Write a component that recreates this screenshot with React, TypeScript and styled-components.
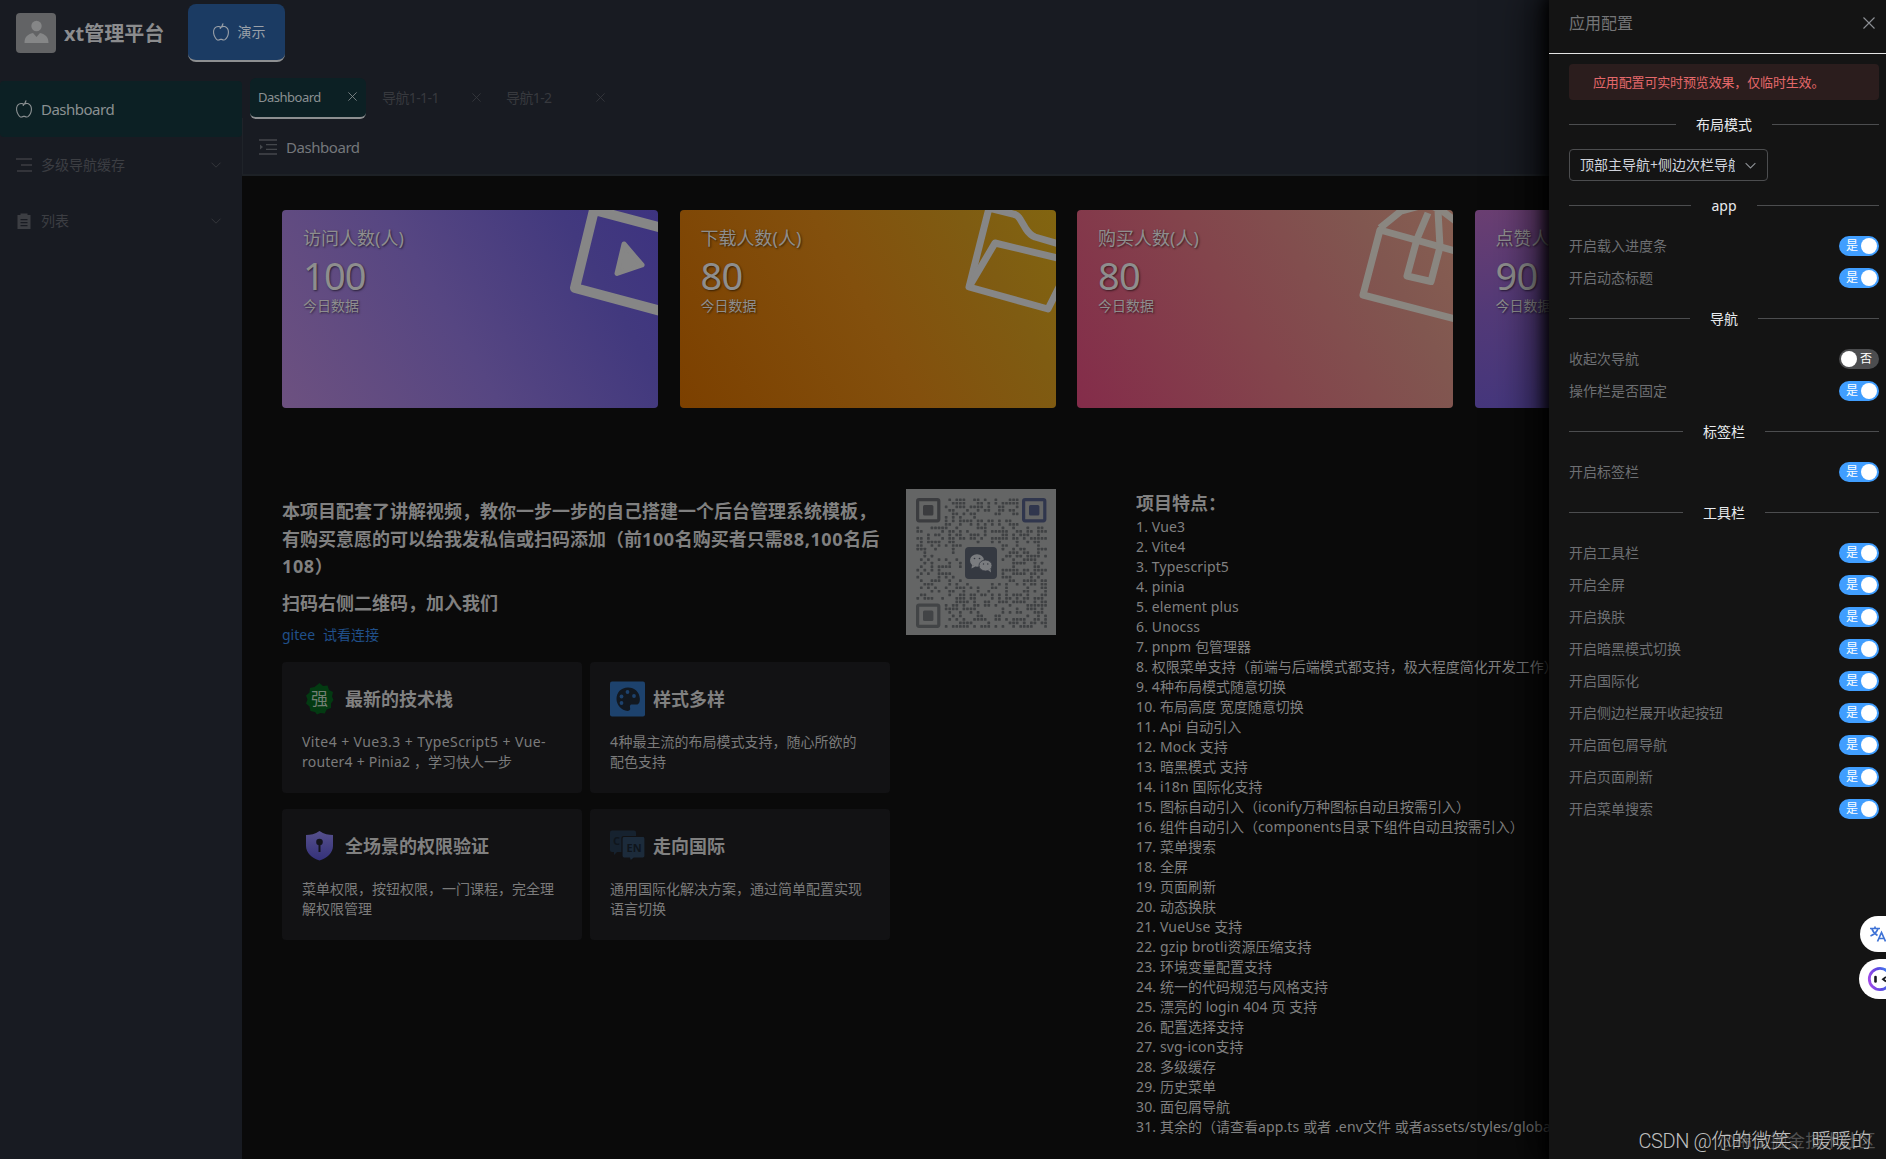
import React from "react";
import styled, { createGlobalStyle, css } from "styled-components";

const GlobalStyle = createGlobalStyle`
  *, *::before, *::after { box-sizing: border-box; }
  html, body { margin: 0; padding: 0; background: #0a0a0a; overflow: hidden; }
  body { font-family: "Noto Sans", "Noto Sans CJK SC", sans-serif; font-size: 14px; line-height: 20px; color: #808080; }
  h1, h2, h3, p, ol { margin: 0; padding: 0; }
`;

/* ---------- frame ---------- */
const Page = styled.div`
  position: relative;
  width: 1886px;
  height: 1159px;
  display: flex;
  flex-direction: column;
  overflow: hidden;
  background: #181b22;
`;
const Header = styled.header`
  flex: none;
  height: 66px;
  display: flex;
  align-items: flex-start;
  padding: 4px 16px 0;
`;
const Brand = styled.div`
  display: flex;
  align-items: center;
  gap: 8px;
  width: 172px;
  height: 58px;
`;
const Avatar = styled.div`
  width: 40px;
  height: 40px;
  border-radius: 4px;
  background: #626365;
  flex: none;
`;
const BrandName = styled.h1`
  font-size: 20px;
  line-height: 28px;
  padding-top: 1px;
  font-weight: 700;
  color: #8b8c8e;
  white-space: nowrap;
`;
const TopTab = styled.div`
  width: 97px;
  height: 58px;
  border-radius: 8px;
  background: #1b3b63;
  border-bottom: 2px solid #8d8f91;
  display: flex;
  align-items: center;
  justify-content: center;
  gap: 7px;
  padding-left: 3px;
  color: #9aa0a8;
`;
const Body = styled.div`
  flex: 1;
  display: flex;
  min-height: 0;
`;
const Sidebar = styled.nav`
  flex: none;
  width: 242px;
  padding-top: 15px;
`;
const MenuItem = styled.div<{ $active?: boolean }>`
  height: 56px;
  display: flex;
  align-items: center;
  gap: 9px;
  padding: 0 20px 0 16px;
  border-radius: 4px;
  color: #3c3e43;
  font-size: 14px;
  ${(p) =>
    p.$active &&
    css`
      gap: 7px;
      padding-left: 14px;
      padding-bottom: 1px;
      background: #0c2024;
      color: #8b9092;
      font-size: 15px;
    `}
`;
const MenuLabel = styled.span<{ $tight?: boolean }>`
  flex: 1;
  white-space: nowrap;
  letter-spacing: ${(p) => (p.$tight ? "-0.5px" : "0")};
`;
const Main = styled.main`
  flex: 1;
  min-width: 0;
  display: flex;
  flex-direction: column;
`;
const Tabs = styled.div`
  display: flex;
  gap: 8px;
  height: 52px;
  padding: 12px 0 0 8px;
`;
const Tab = styled.div<{ $active?: boolean; $width: number }>`
  width: ${(p) => p.$width}px;
  height: 41px;
  display: flex;
  align-items: center;
  justify-content: space-between;
  padding: 0 9px 0 8px;
  border-bottom: 2px solid transparent;
  color: #37393e;
  white-space: nowrap;
  letter-spacing: -0.6px;
  ${(p) =>
    p.$active &&
    css`
      padding-bottom: 2px;
      background: #0c2024;
      border-color: #8d8f91;
      border-radius: 6px;
      color: #8b9092;
      font-size: 13px;
      letter-spacing: -0.5px;
    `}
`;
const Crumbs = styled.div`
  height: 58px;
  display: flex;
  align-items: center;
  gap: 9px;
  padding: 1px 0 0 16px;
  border-bottom: 2px solid #1d2126;
  border-left: 1px solid #1f2329;
  font-size: 15px;
  letter-spacing: -0.45px;
  color: #74777b;
`;
const Content = styled.section`
  flex: 1;
  background: #0a0a0a;
  padding: 34px 0 0 40px;
  overflow: hidden;
`;

/* ---------- statistic cards ---------- */
const Stats = styled.div`
  display: grid;
  grid-template-columns: repeat(4, 376px);
  column-gap: 21.5px;
`;
const StatCard = styled.article<{ $bg: string }>`
  position: relative;
  height: 198px;
  border-radius: 4px;
  overflow: hidden;
  padding: 15px 21px;
  background: ${(p) => p.$bg};
  color: #8e8e8e;
  text-shadow: 1px 1px 2px rgba(0, 0, 0, 0.55);
`;
const StatTitle = styled.div`
  font-size: 18px;
  line-height: 26px;
`;
const StatValue = styled.div`
  font-size: 38px;
  line-height: 46px;
  margin-top: 1px;
  letter-spacing: -0.8px;
`;
const StatNote = styled.div`
  font-size: 14px;
  line-height: 16px;
`;
const StatArt = styled.svg`
  position: absolute;
  inset: 0;
  width: 376px;
  height: 199px;
  fill: none;
  stroke: #868686;
  stroke-width: 7;
  stroke-linejoin: round;
`;

/* ---------- introduction ---------- */
const Intro = styled.div`
  display: flex;
  padding-top: 81px;
`;
const Pitch = styled.div`
  width: 607px;
  padding-top: 9px;
  margin-right: 17px;
`;
const PitchText = styled.h2<{ $top?: number }>`
  font-size: 18px;
  line-height: 27.6px;
  font-weight: 700;
  color: #808080;
  margin-top: ${(p) => p.$top ?? 0}px;
  white-space: nowrap;
`;
const Links = styled.div`
  display: flex;
  gap: 8px;
  margin-top: 8px;
  height: 20px;
  color: #20508a;
`;
const Features = styled.div`
  display: grid;
  grid-template-columns: 300px 300px;
  grid-auto-rows: 131px;
  gap: 16px 8px;
  margin: 17px 0 0;
`;
const Feature = styled.article`
  background: #121214;
  border-radius: 4px;
  padding: 19px 20px;
`;
const FeatureHead = styled.div`
  display: flex;
  align-items: center;
  gap: 8px;
  height: 36px;
  margin-bottom: 15px;
`;
const FeatureTitle = styled.h3`
  font-size: 18px;
  line-height: 26px;
  color: #808080;
`;
const FeatureText = styled.p`
  color: #7b7b7b;
  white-space: nowrap;
`;
const QrBox = styled.svg`
  flex: none;
  width: 150px;
  height: 146px;
  margin-right: 80px;
  background: #646565;
`;
const Points = styled.div`
  white-space: nowrap;
`;
const PointsTitle = styled.h2`
  font-size: 18px;
  line-height: 28px;
  color: #808080;
`;
const Point = styled.p`
  height: 20px;
`;
const Latin = styled.span<{ $track: number }>`
  letter-spacing: ${(p) => p.$track}em;
`;

/* ---------- drawer ---------- */
const Drawer = styled.aside`
  position: absolute;
  top: 0;
  right: 0;
  width: 337px;
  height: 100%;
  background: #141414;
  box-shadow: 0 0 14px 4px #000, -12px 0 36px 6px rgba(0, 0, 0, 0.55);
`;
const DrawerHead = styled.div`
  height: 54px;
  display: flex;
  align-items: center;
  justify-content: space-between;
  padding: 0 11px 7px 20px;
  border-bottom: 1px solid #e4e4e4;
  font-size: 16px;
  color: #747577;
`;
const DrawerBody = styled.div`
  padding: 10px 7px 0 20px;
`;
const Alert = styled.div`
  height: 36px;
  border-radius: 4px;
  background: #2b1d1d;
  color: #e4686a;
  font-size: 13px;
  letter-spacing: -0.15px;
  line-height: 36px;
  padding-left: 24px;
`;
const Divider = styled.div`
  display: flex;
  align-items: center;
  gap: 20px;
  height: 1px;
  margin: 24px 0;
  color: #e8eaed;
  font-size: 14px;
  white-space: nowrap;
  &::before,
  &::after {
    content: "";
    flex: 1;
    height: 1px;
    background: #4c4d4f;
  }
`;
const Select = styled.div`
  width: 199px;
  height: 32px;
  border: 1px solid #4c4d4f;
  border-radius: 4px;
  display: flex;
  align-items: center;
  gap: 9px;
  padding: 0 10px;
  color: #cfd3dc;
`;
const SelectText = styled.span`
  flex: 1;
  overflow: hidden;
  white-space: nowrap;
`;
const Setting = styled.div`
  height: 32px;
  display: flex;
  align-items: center;
  justify-content: space-between;
  color: #6d6f72;
`;
const Switch = styled.div<{ $on: boolean }>`
  width: 40px;
  height: 20px;
  border-radius: 10px;
  display: flex;
  align-items: center;
  justify-content: space-between;
  flex-direction: ${(p) => (p.$on ? "row" : "row-reverse")};
  padding: ${(p) => (p.$on ? "0 2px 0 7px" : "0 7px 0 2px")};
  background: ${(p) => (p.$on ? "#409eff" : "#4c4d4f")};
  color: #fff;
  font-size: 12px;
  &::after {
    content: "";
    width: 16px;
    height: 16px;
    border-radius: 50%;
    background: #fff;
  }
`;

/* ---------- overlays ---------- */
const FloatButton = styled.div<{ $top: number; $left: number; $size: number }>`
  position: absolute;
  top: ${(p) => p.$top}px;
  left: ${(p) => p.$left}px;
  width: 60px;
  height: ${(p) => p.$size}px;
  border-radius: ${(p) => p.$size / 2}px;
  background: #fff;
`;
const Watermark = styled.div<{ $back?: boolean }>`
  position: absolute;
  left: ${(p) => (p.$back ? 1719 : 1638.5)}px;
  top: 1126px;
  line-height: 30px;
  white-space: nowrap;
  font-family: Roboto, "Noto Sans CJK SC", sans-serif;
  font-size: ${(p) => (p.$back ? 17.6 : 20)}px;
  font-weight: ${(p) => (p.$back ? 400 : 300)};
  color: ${(p) => (p.$back ? "#505050" : "#c0c0c0")};
`;

/* ---------- icons ---------- */
const AppleIcon = ({ size }: { size: number }) => (
  <svg width={size} height={size} viewBox="0 0 1024 1024" fill="currentColor">
    <path d="M599.872 203.776a189.44 189.44 0 0 1 64.384-4.672l2.624.128c31.168 1.024 51.2 4.096 79.488 16.32 37.632 16.128 74.496 45.056 111.488 89.344 96.384 115.264 82.752 372.8-34.752 521.728-7.68 9.728-32 41.6-30.72 39.936a426.624 426.624 0 0 1-30.08 35.776c-31.232 32.576-65.28 49.216-110.08 50.048-31.36.64-53.568-5.312-84.288-18.752l-6.528-2.88c-20.992-9.216-30.592-11.904-47.296-11.904-18.112 0-28.608 2.88-51.136 12.672l-6.464 2.816c-28.416 12.224-48.32 18.048-76.16 19.2-74.112 2.752-116.928-38.08-180.672-132.16-96.64-142.08-132.608-349.312-55.04-486.4 46.272-81.92 129.92-133.632 220.672-135.04 32.832-.576 60.288 6.848 99.648 22.72 27.136 10.88 34.752 13.76 37.376 14.272 16.256-20.16 27.776-36.992 34.56-50.24 13.568-26.304 27.2-59.968 40.704-100.8a32 32 0 1 1 60.8 20.224c-12.608 37.888-25.408 70.4-38.528 97.664zm-51.52 78.08c-14.528 17.792-31.808 37.376-51.904 58.816a32 32 0 1 1-46.72-43.776l12.288-13.248c-28.032-11.2-61.248-26.688-95.68-26.112-70.4 1.088-135.296 41.6-171.648 105.792C121.6 492.608 176 684.16 247.296 788.992c34.816 51.328 76.352 108.992 130.944 106.944 52.48-2.112 72.32-34.688 135.872-34.688 63.552 0 81.28 34.688 136.96 33.536 56.448-1.088 75.776-39.04 126.848-103.872 107.904-136.768 107.904-362.752 35.776-449.088-72.192-86.272-124.672-84.096-151.68-85.12-41.472-4.288-81.6 12.544-113.664 25.152z" />
  </svg>
);
const PersonIcon = () => (
  <svg width="40" height="40" viewBox="0 0 40 40" fill="#858687">
    <circle cx="20.5" cy="13" r="5.2" />
    <path d="M8.5 30c0-6 3-8.5 8.5-10l3.5 4 3.5-4c5.500 1.500 8.500 4 8.500 10z" />
  </svg>
);
const LinesIcon = () => (
  <svg width="16" height="16" viewBox="0 0 16 16" stroke="currentColor" strokeWidth="1.6">
    <path d="M0 2h16M5 8h11M1 14h15" />
  </svg>
);
const ClipboardIcon = () => (
  <svg width="16" height="18" viewBox="0 0 16 18" fill="currentColor">
    <path
      fillRule="evenodd"
      d="M1.500 3h3V1.500h7V3h3v14h-13zM4.500 7h7V8.300h-7zM4.500 10h7v1.300h-7zM4.500 13h7v1.300h-7z"
    />
  </svg>
);
const IndentIcon = () => (
  <svg width="18" height="16" viewBox="0 0 18 16" stroke="#44474c" strokeWidth="1.3">
    <path d="M0 1h18M7 5.700h11M7 10.300h11M0 15h18" />
    <path d="M1 5.500 4 8l-3 2.500z" fill="#44474c" stroke="none" />
  </svg>
);
const Chevron = ({ size, color }: { size: number; color: string }) => (
  <svg width={size} height={size} viewBox="0 0 12 12" fill="none" stroke={color} strokeWidth="1">
    <path d="M1.500 3.700 6 8.200l4.500-4.500" />
  </svg>
);
const Cross = ({ size, color = "currentColor" }: { size: number; color?: string }) => (
  <svg width={size} height={size} viewBox="0 0 12 12" stroke={color} strokeWidth="1.1">
    <path d="M.5.5l11 11M11.500.5l-11 11" />
  </svg>
);
const StrongIcon = () => (
  <svg width="35" height="36" viewBox="0 0 35 36">
    <path
      d="M17.500 2l3.500 3 4.500-.5 1.500 4.500 4 2-1 4.500 1.500 3.500-2.500 3.500v4.500l-4.300 1.500-2 4-4.200-.5-3.500 1.500-2-2.500-4.500-1-1-4.500-3.500-3 1.500-4-1.500-4 3.500-3 .5-4.500 4.500-1z"
      fill="#033a12"
    />
    <text x="17.500" y="24" textAnchor="middle" fontSize="17" fill="#748076" fontFamily="'Noto Sans CJK SC', sans-serif">
      强
    </text>
  </svg>
);
const PaletteIcon = () => (
  <svg width="35" height="36" viewBox="0 0 35 36">
    <rect y=".5" width="35" height="35" rx="2" fill="#1d426d" />
    <path
      d="M18 6.500C11 6.500 6.500 11.500 6.500 18c0 6 5 11.500 11 12 1.500 0 3-1 2.700-2.700-.5-2-.5-3.800 1.800-3.800h4.500c2.500 0 3.500-2.500 3.300-6C29.500 11 24.500 6.500 18 6.500z"
      fill="#121820"
    />
    <g fill="#1d426d">
      <circle cx="11.500" cy="22" r="1.900" />
      <circle cx="11.500" cy="15.500" r="1.900" />
      <circle cx="17.500" cy="11" r="1.900" />
      <circle cx="24" cy="15" r="1.900" />
    </g>
  </svg>
);
const ShieldIcon = () => (
  <svg width="35" height="36" viewBox="0 0 35 36">
    <defs>
      <linearGradient id="shield" x1="0" y1="0" x2="0" y2="1">
        <stop offset="0" stopColor="#56508c" />
        <stop offset="1" stopColor="#34317a" />
      </linearGradient>
    </defs>
    <path d="M17.500 3C22 6 26.500 7 31 7v11c0 7-6 12-13.500 14.500C10 30 4 25 4 18V7c4.500 0 9-1 13.500-4z" fill="url(#shield)" />
    <circle cx="17.500" cy="14" r="3.300" fill="#14141c" />
    <path d="M16.500 15h2v9h-2z" fill="#14141c" />
  </svg>
);
const LanguageIcon = () => (
  <svg width="35" height="36" viewBox="0 0 35 36">
    <path d="M2 2.500h22q2 0 2 2V24H7l-3 3v-3H2q-2 0-2-2V4.500q0-2 2-2z" fill="#16222f" />
    <text x="3" y="17" fontSize="11" fontFamily="'Noto Sans', sans-serif" fontWeight="700" fill="#0f151c">
      C
    </text>
    <path
      d="M14 8.500h19q2 0 2 2V28q0 2-2 2h-9l-3.500 3-1-3H14q-2 0-2-2V10.500q0-2 2-2z"
      fill="#1c2b3b"
      stroke="#121214"
      strokeWidth="1.200"
    />
    <text x="16.500" y="24" fontSize="11" fontFamily="'Noto Sans', sans-serif" fontWeight="700" fill="#0f151c">
      EN
    </text>
  </svg>
);

/* ---------- QR code ---------- */
const N = 37;
const isReserved = (r: number, c: number) =>
  (r < 8 && c < 8) || (r < 8 && c > N - 9) || (r > N - 9 && c < 8) || (r > 12 && r < 24 && c > 12 && c < 24);
const modules: [number, number][] = [];
let seed = 20230;
for (let r = 0; r < N; r++) {
  for (let c = 0; c < N; c++) {
    seed = (seed * 1103515245 + 12345) % 2147483648;
    if (!isReserved(r, c) && seed / 2147483648 < 0.47) modules.push([r, c]);
  }
}
const Finder = ({ x, y, color }: { x: number; y: number; color: string }) => (
  <g>
    <rect x={x + 1.6} y={y + 1.6} width="21.2" height="21.2" rx="1.5" fill="none" stroke={color} strokeWidth="3.2" />
    <rect x={x + 7} y={y + 7} width="10.4" height="10.4" rx="1.5" fill={color} />
  </g>
);
const QrCode = () => (
  <QrBox viewBox="0 0 150 146">
    {modules.map(([r, c]) => (
      <rect key={`${r}-${c}`} x={10 + c * 3.55 + 0.4} y={9 + r * 3.52 + 0.4} width="2.7" height="2.7" rx=".6" fill="#3f4143" />
    ))}
    <Finder x={10} y={9} color="#3b3c3f" />
    <Finder x={116} y={9} color="#30364d" />
    <Finder x={10} y={114.5} color="#424446" />
    <rect x="59" y="58" width="32" height="32" rx="4" fill="#353941" />
    <g fill="#7a7c7f">
      <ellipse cx="71" cy="71.5" rx="7" ry="6.2" />
      <path d="M66 76l-.5 3.500 4-2z" />
      <ellipse cx="79.5" cy="76.5" rx="6.5" ry="5.5" stroke="#353941" strokeWidth=".8" />
      <path d="M82 81l3 2.500-.5-4z" />
    </g>
    <g fill="#353941">
      <circle cx="68.5" cy="69.5" r=".8" />
      <circle cx="73.5" cy="69.5" r=".8" />
      <circle cx="77.5" cy="75" r=".7" />
      <circle cx="81.8" cy="75" r=".7" />
    </g>
  </QrBox>
);

/* Tracks the Latin runs of a mixed-script line, leaving Chinese glyphs on their grid. */
const Mixed = ({ text, track = 0.01 }: { text: string; track?: number }) => (
  <>
    {text.split(/([\x20-\x7e]+)/).map((run, i) =>
      i % 2 ? (
        <Latin key={i} $track={track}>
          {run}
        </Latin>
      ) : (
        run
      ),
    )}
  </>
);

const stats = [
  {
    title: "访问人数(人)",
    value: 100,
    bg: "linear-gradient(60deg, #6d5180 0%, #564682 45%, #42397e 80%, #3d3380 100%)",
    art: (
      <>
        <path d="M392 21 312 0 293 78 392 104.500" strokeWidth="10" />
        <path d="M342 34 360 55 335 63.500z" fill="#868686" strokeWidth="5" />
      </>
    ),
  },
  {
    title: "下载人数(人)",
    value: 80,
    bg: "linear-gradient(60deg, #7c4000 0%, #83500d 50%, #7f5c12 80%, #826510 100%)",
    art: (
      <>
        <path d="M382 35 355 27Q350 25 346 19L340 9Q338 5 333 4L309 -2 289 77 368 99 384 67" />
        <path d="M289 77 315 33 382 49" />
      </>
    ),
  },
  {
    title: "购买人数(人)",
    value: 80,
    bg: "linear-gradient(60deg, #842c4a 0%, #83454c 45%, #815750 80%, #875f52 100%)",
    art: (
      <g stroke="#8a8680">
        <path d="M382 42 303 20 286 85 382 110" />
        <path d="M303 18 324 1 350 -6 364 0 380 12" />
        <path d="M340 29 330 66 354 71.500 363 37M340 29 351 3M363 37 361 1" />
      </g>
    ),
  },
  {
    title: "点赞人数(人)",
    value: 90,
    bg: "linear-gradient(170deg, #6b3f72 0%, #533a78 40%, #3d3580 100%)",
    art: null,
  },
];

const features = [
  { icon: <StrongIcon />, title: "最新的技术栈", lines: ["Vite4 + Vue3.3 + TypeScript5 + Vue-", "router4 + Pinia2 ，学习快人一步"] },
  { icon: <PaletteIcon />, title: "样式多样", lines: ["4种最主流的布局模式支持，随心所欲的", "配色支持"] },
  { icon: <ShieldIcon />, title: "全场景的权限验证", lines: ["菜单权限，按钮权限，一门课程，完全理", "解权限管理"] },
  { icon: <LanguageIcon />, title: "走向国际", lines: ["通用国际化解决方案，通过简单配置实现", "语言切换"] },
];

const points = [
  "Vue3",
  "Vite4",
  "Typescript5",
  "pinia",
  "element plus",
  "Unocss",
  "pnpm 包管理器",
  "权限菜单支持（前端与后端模式都支持，极大程度简化开发工作）",
  "4种布局模式随意切换",
  "布局高度 宽度随意切换",
  "Api 自动引入",
  "Mock 支持",
  "暗黑模式 支持",
  "i18n 国际化支持",
  "图标自动引入（iconify万种图标自动且按需引入）",
  "组件自动引入（components目录下组件自动且按需引入）",
  "菜单搜索",
  "全屏",
  "页面刷新",
  "动态换肤",
  "VueUse 支持",
  "gzip brotli资源压缩支持",
  "环境变量配置支持",
  "统一的代码规范与风格支持",
  "漂亮的 login 404 页 支持",
  "配置选择支持",
  "svg-icon支持",
  "多级缓存",
  "历史菜单",
  "面包屑导航",
  "其余的（请查看app.ts 或者 .env文件 或者assets/styles/global",
];

const groups: { title: string; items: [string, boolean][] }[] = [
  { title: "app", items: [["开启载入进度条", true], ["开启动态标题", true]] },
  { title: "导航", items: [["收起次导航", false], ["操作栏是否固定", true]] },
  { title: "标签栏", items: [["开启标签栏", true]] },
  {
    title: "工具栏",
    items: [
      ["开启工具栏", true],
      ["开启全屏", true],
      ["开启换肤", true],
      ["开启暗黑模式切换", true],
      ["开启国际化", true],
      ["开启侧边栏展开收起按钮", true],
      ["开启面包屑导航", true],
      ["开启页面刷新", true],
      ["开启菜单搜索", true],
    ],
  },
];

export default function App() {
  return (
    <>
      <GlobalStyle />
      <Page>
        <Header>
          <Brand>
            <Avatar>
              <PersonIcon />
            </Avatar>
            <BrandName>xt管理平台</BrandName>
          </Brand>
          <TopTab>
            <AppleIcon size={20} />
            演示
          </TopTab>
        </Header>
        <Body>
          <Sidebar>
            <MenuItem $active>
              <AppleIcon size={20} />
              <MenuLabel $tight>Dashboard</MenuLabel>
            </MenuItem>
            <MenuItem>
              <LinesIcon />
              <MenuLabel>多级导航缓存</MenuLabel>
              <Chevron size={12} color="#34363b" />
            </MenuItem>
            <MenuItem>
              <ClipboardIcon />
              <MenuLabel>列表</MenuLabel>
              <Chevron size={12} color="#34363b" />
            </MenuItem>
          </Sidebar>
          <Main>
            <Tabs>
              <Tab $active $width={116}>
                Dashboard <Cross size={9} />
              </Tab>
              <Tab $width={116}>
                导航1-1-1 <Cross size={9} />
              </Tab>
              <Tab $width={116}>
                导航1-2 <Cross size={9} />
              </Tab>
            </Tabs>
            <Crumbs>
              <IndentIcon />
              Dashboard
            </Crumbs>
            <Content>
              <Stats>
                {stats.map((s) => (
                  <StatCard key={s.title} $bg={s.bg}>
                    <StatArt viewBox="0 0 376 199">{s.art}</StatArt>
                    <StatTitle>{s.title}</StatTitle>
                    <StatValue>{s.value}</StatValue>
                    <StatNote>今日数据</StatNote>
                  </StatCard>
                ))}
              </Stats>
              <Intro>
                <Pitch>
                  <PitchText>
                    本项目配套了讲解视频，教你一步一步的自己搭建一个后台管理系统模板，
                    <br />
                    <Mixed track={0.035} text="有购买意愿的可以给我发私信或扫码添加（前100名购买者只需88,100名后" />
                    <br />
                    <Mixed track={0.035} text="108" />）
                  </PitchText>
                  <PitchText $top={9}>扫码右侧二维码，加入我们</PitchText>
                  <Links>
                    <span>gitee</span>
                    <span>试看连接</span>
                  </Links>
                  <Features>
                    {features.map((f) => (
                      <Feature key={f.title}>
                        <FeatureHead>
                          {f.icon}
                          <FeatureTitle>{f.title}</FeatureTitle>
                        </FeatureHead>
                        {f.lines.map((line) => (
                          <FeatureText key={line}>
                            <Mixed track={line.startsWith("router4") ? 0.015 : 0.03} text={line} />
                          </FeatureText>
                        ))}
                      </Feature>
                    ))}
                  </Features>
                </Pitch>
                <QrCode />
                <Points>
                  <PointsTitle>项目特点：</PointsTitle>
                  {points.map((point, i) => (
                    <Point key={point}>
                      <Mixed text={`${i + 1}. ${point}`} />
                    </Point>
                  ))}
                </Points>
              </Intro>
            </Content>
          </Main>
        </Body>

        <Drawer>
          <DrawerHead>
            应用配置
            <Cross size={12} color="#8d9095" />
          </DrawerHead>
          <DrawerBody>
            <Alert>应用配置可实时预览效果，仅临时生效。</Alert>
            <Divider>布局模式</Divider>
            <Select>
              <SelectText>顶部主导航+侧边次栏导航</SelectText>
              <Chevron size={13} color="#8d9095" />
            </Select>
            {groups.map((g) => (
              <React.Fragment key={g.title}>
                <Divider>{g.title}</Divider>
                {g.items.map(([label, on]) => (
                  <Setting key={label}>
                    {label}
                    <Switch $on={on}>{on ? "是" : "否"}</Switch>
                  </Setting>
                ))}
              </React.Fragment>
            ))}
          </DrawerBody>
        </Drawer>

        <FloatButton $top={916} $left={1860} $size={36}>
          <svg width="26" height="36" viewBox="0 0 26 36" fill="none" stroke="#3f73d6" strokeWidth="1.7">
            <path d="M10 12.500h10M15 10.500v2M18 12.500c-1 3.500-4 6-7.500 7.500M12 13c1 3 3 5 5.500 6.500" />
            <path d="M17.500 25.500 21.500 16.500 25.500 25.500M19 22.500h5" />
          </svg>
        </FloatButton>
        <FloatButton $top={959} $left={1859} $size={40}>
          <svg width="27" height="40" viewBox="0 0 27 40" fill="none">
            <defs>
              <linearGradient id="ring" x1="0" y1=".7" x2="1" y2=".5">
                <stop offset="0" stopColor="#a04be8" />
                <stop offset=".5" stopColor="#5a48e0" />
                <stop offset="1" stopColor="#3a8df0" />
              </linearGradient>
            </defs>
            <circle cx="21" cy="20" r="10.7" stroke="url(#ring)" strokeWidth="2.8" />
            <path d="M16.500 18v4.500" stroke="#16181c" strokeWidth="2.6" strokeLinecap="round" />
            <path d="M27 18l-3 2.200 3 2.200" stroke="#16181c" strokeWidth="1.8" />
          </svg>
        </FloatButton>
        <Watermark $back>@稀土掘金技术社区</Watermark>
        <Watermark>
          <Mixed track={-0.02} text="CSDN @你的微笑、暖暖的" />
        </Watermark>
      </Page>
    </>
  );
}
